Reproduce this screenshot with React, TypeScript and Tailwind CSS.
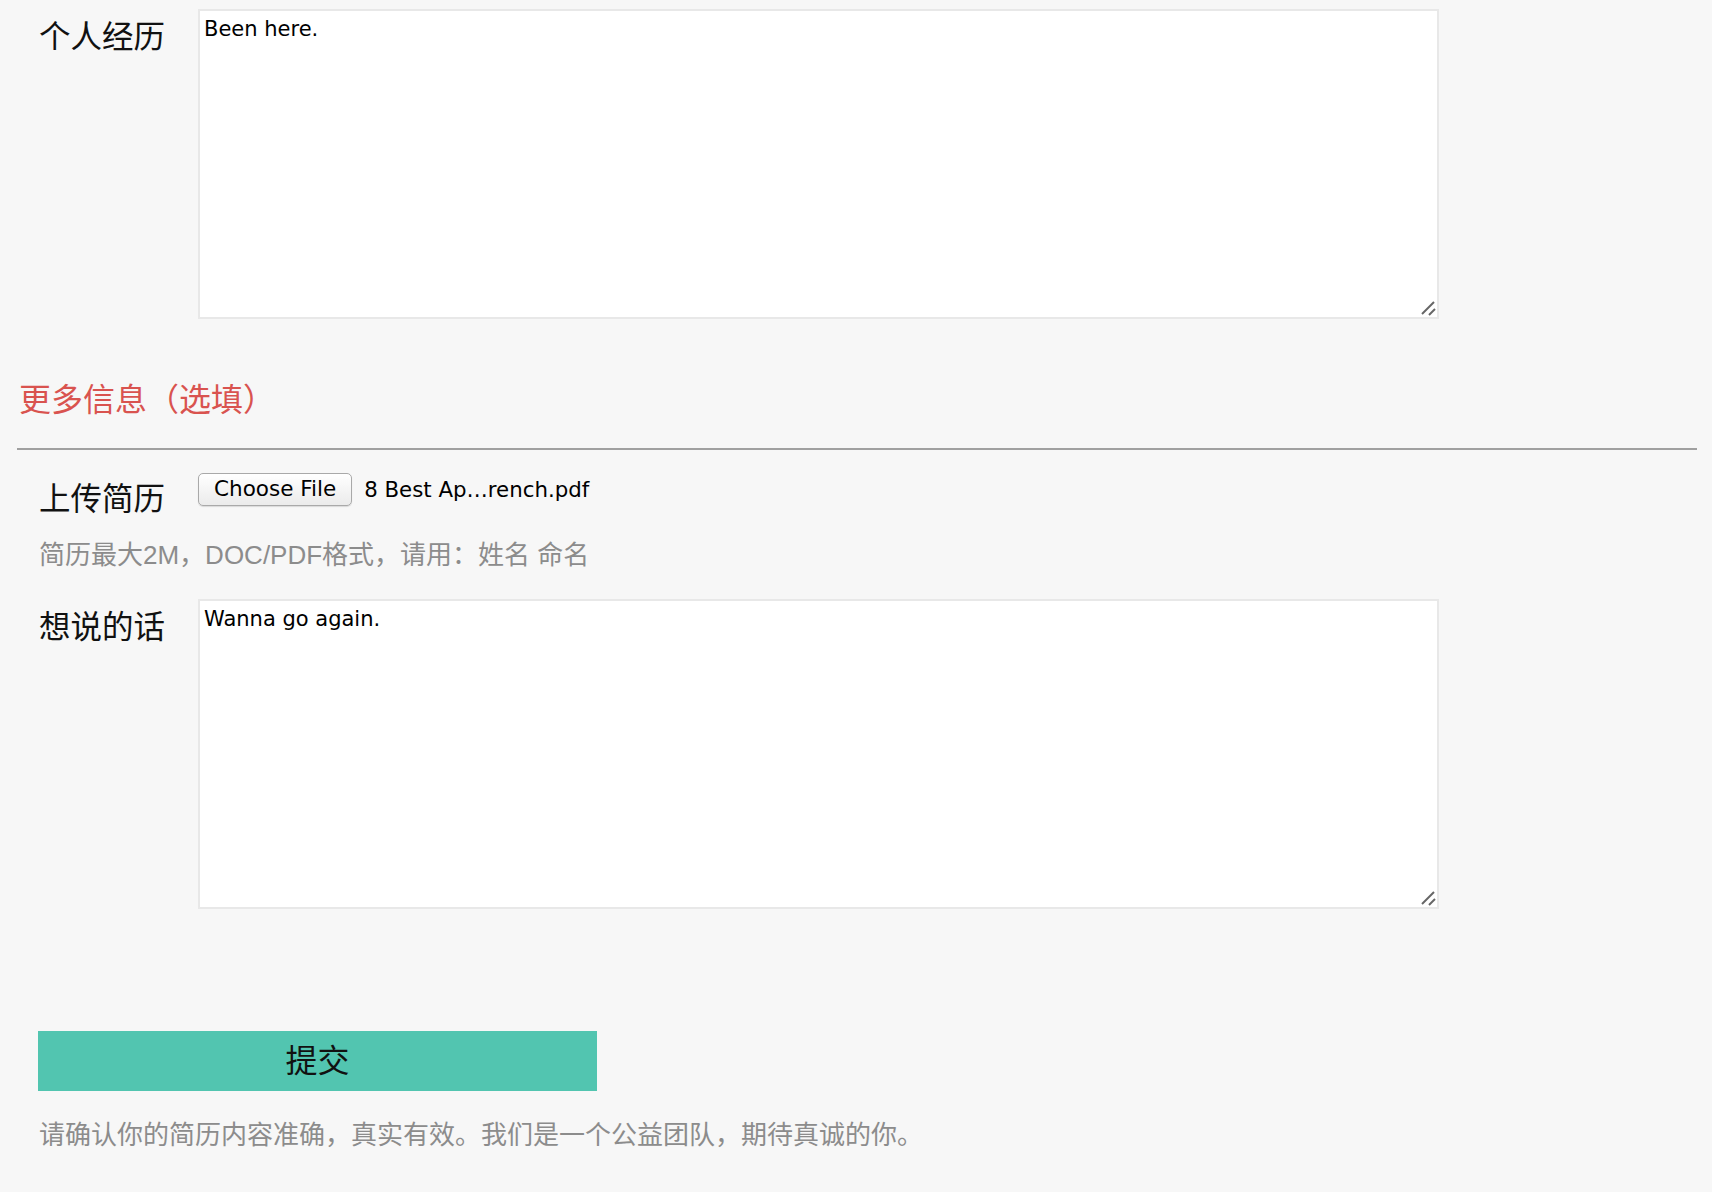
import React from "react";

const cjk = "font-['Noto_Sans_CJK_SC',sans-serif]";
const ui = "font-['DejaVu_Sans','Noto_Sans_CJK_SC',sans-serif]";
const hintFont = "font-['Liberation_Sans','Noto_Sans_CJK_SC',sans-serif]";

const Label = ({ text, className = "" }: { text: string; className?: string }) => (
  <div className={`w-[159px] shrink-0 text-[31.5px] leading-none text-[#111] ${cjk} ${className}`}>{text}</div>
);

const Area = ({ value }: { value: string }) => (
  <div className="relative shrink-0">
    <textarea
      defaultValue={value}
      className={`block w-[1241px] h-[310px] resize-none border-2 border-[#e8e8e8] bg-white px-[4px] py-[3px] text-[21px] text-black outline-none ${ui}`}
    />
    {/* resize grip */}
    <svg className="pointer-events-none absolute bottom-[3px] right-[3px]" width="16" height="16" viewBox="0 0 16 16">
      <line x1="2" y1="14" x2="14" y2="2" stroke="#666" strokeWidth="2" />
      <line x1="9" y1="15" x2="15" y2="9" stroke="#666" strokeWidth="2" />
    </svg>
  </div>
);

export default function App() {
  return (
    <div className="min-h-screen bg-[#f7f7f7] pl-[17px] pr-[15px] pt-[9px] pb-[40px]">
      <div className="flex pl-[22px]">
        <Label text="个人经历" className="mt-[10px]" />
        <Area value="Been here." />
      </div>

      <h2 className={`mt-[62px] ml-[2px] text-[32px] leading-none text-[#d9534f] ${cjk}`}>更多信息（选填）</h2>

      <div className="mt-[35px] h-[2px] bg-[#a0a0a0]" />

      <div className="mt-[23px] flex items-start pl-[22px]">
        <Label text="上传简历" className="mt-[8px]" />
        <div className="flex items-center">
          <span
            className={`flex h-[33px] items-center rounded-[5px] border border-[#a9a9a9] bg-gradient-to-b from-white to-[#ebebeb] px-[15px] text-[21.5px] text-black shadow-[0_1px_1px_rgba(0,0,0,0.12)] ${ui}`}
          >
            Choose File
          </span>
          <span className={`ml-[12px] text-[21.3px] text-black ${ui}`}>8 Best Ap…rench.pdf</span>
        </div>
      </div>

      <p className={`mt-[29px] pl-[22px] text-[26px] leading-none text-[#8c8c8c] ${hintFont}`}>
        简历最大2M，DOC/PDF格式，请用：姓名 命名
      </p>

      <div className="mt-[31px] flex pl-[22px]">
        <Label text="想说的话" className="mt-[10px]" />
        <Area value="Wanna go again." />
      </div>

      <button
        type="button"
        className={`mt-[122px] ml-[21px] flex h-[60px] w-[559px] items-center justify-center bg-[#52c5b0] pb-[5px] text-[32px] leading-none text-[#111] ${cjk}`}
      >
        提交
      </button>

      <p className={`mt-[29px] pl-[22px] text-[26px] leading-none text-[#8c8c8c] ${cjk}`}>
        请确认你的简历内容准确，真实有效。我们是一个公益团队，期待真诚的你。
      </p>
    </div>
  );
}
